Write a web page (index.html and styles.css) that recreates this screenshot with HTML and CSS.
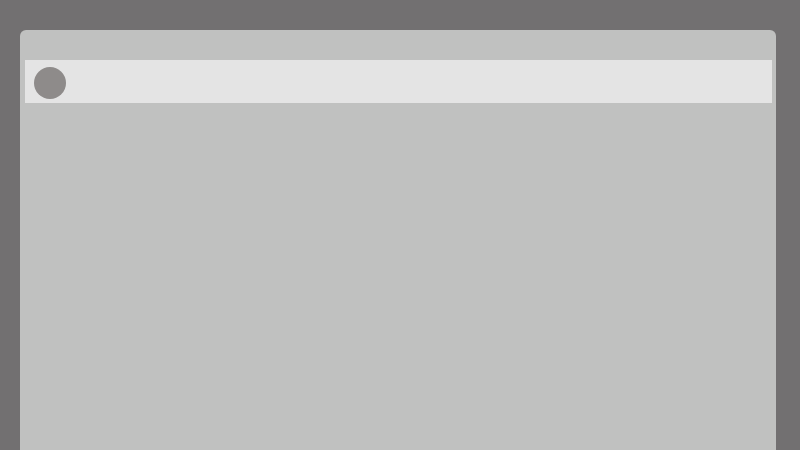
FILE: index.html
```html
<!DOCTYPE html>
<html>
<head>
<meta charset="utf-8">
<link rel="stylesheet" href="styles.css">
</head>
<body>
<div class="panel">
  <div class="bar">
    <div class="avatar"></div>
  </div>
</div>
</body>
</html>
```
FILE: styles.css
```css
html, body {
  margin: 0;
  padding: 0;
  height: 100%;
  overflow: hidden;
}
body {
  background: #727071;
  font-family: "Liberation Sans", sans-serif;
  padding: 30px 24px 0 20px;
  box-sizing: border-box;
}
.panel {
  width: 756px;
  height: 420px;
  background: #c0c1c0;
  border-radius: 6px 6px 0 0;
  padding: 30px 4px 0 5px;
  box-sizing: border-box;
}
.bar {
  height: 43px;
  background: #e4e4e4;
  display: flex;
  align-items: center;
  padding: 2px 0 0 9px;
  box-sizing: border-box;
}
.avatar {
  width: 32px;
  height: 32px;
  border-radius: 50%;
  background: #8e8b8a;
}
```
